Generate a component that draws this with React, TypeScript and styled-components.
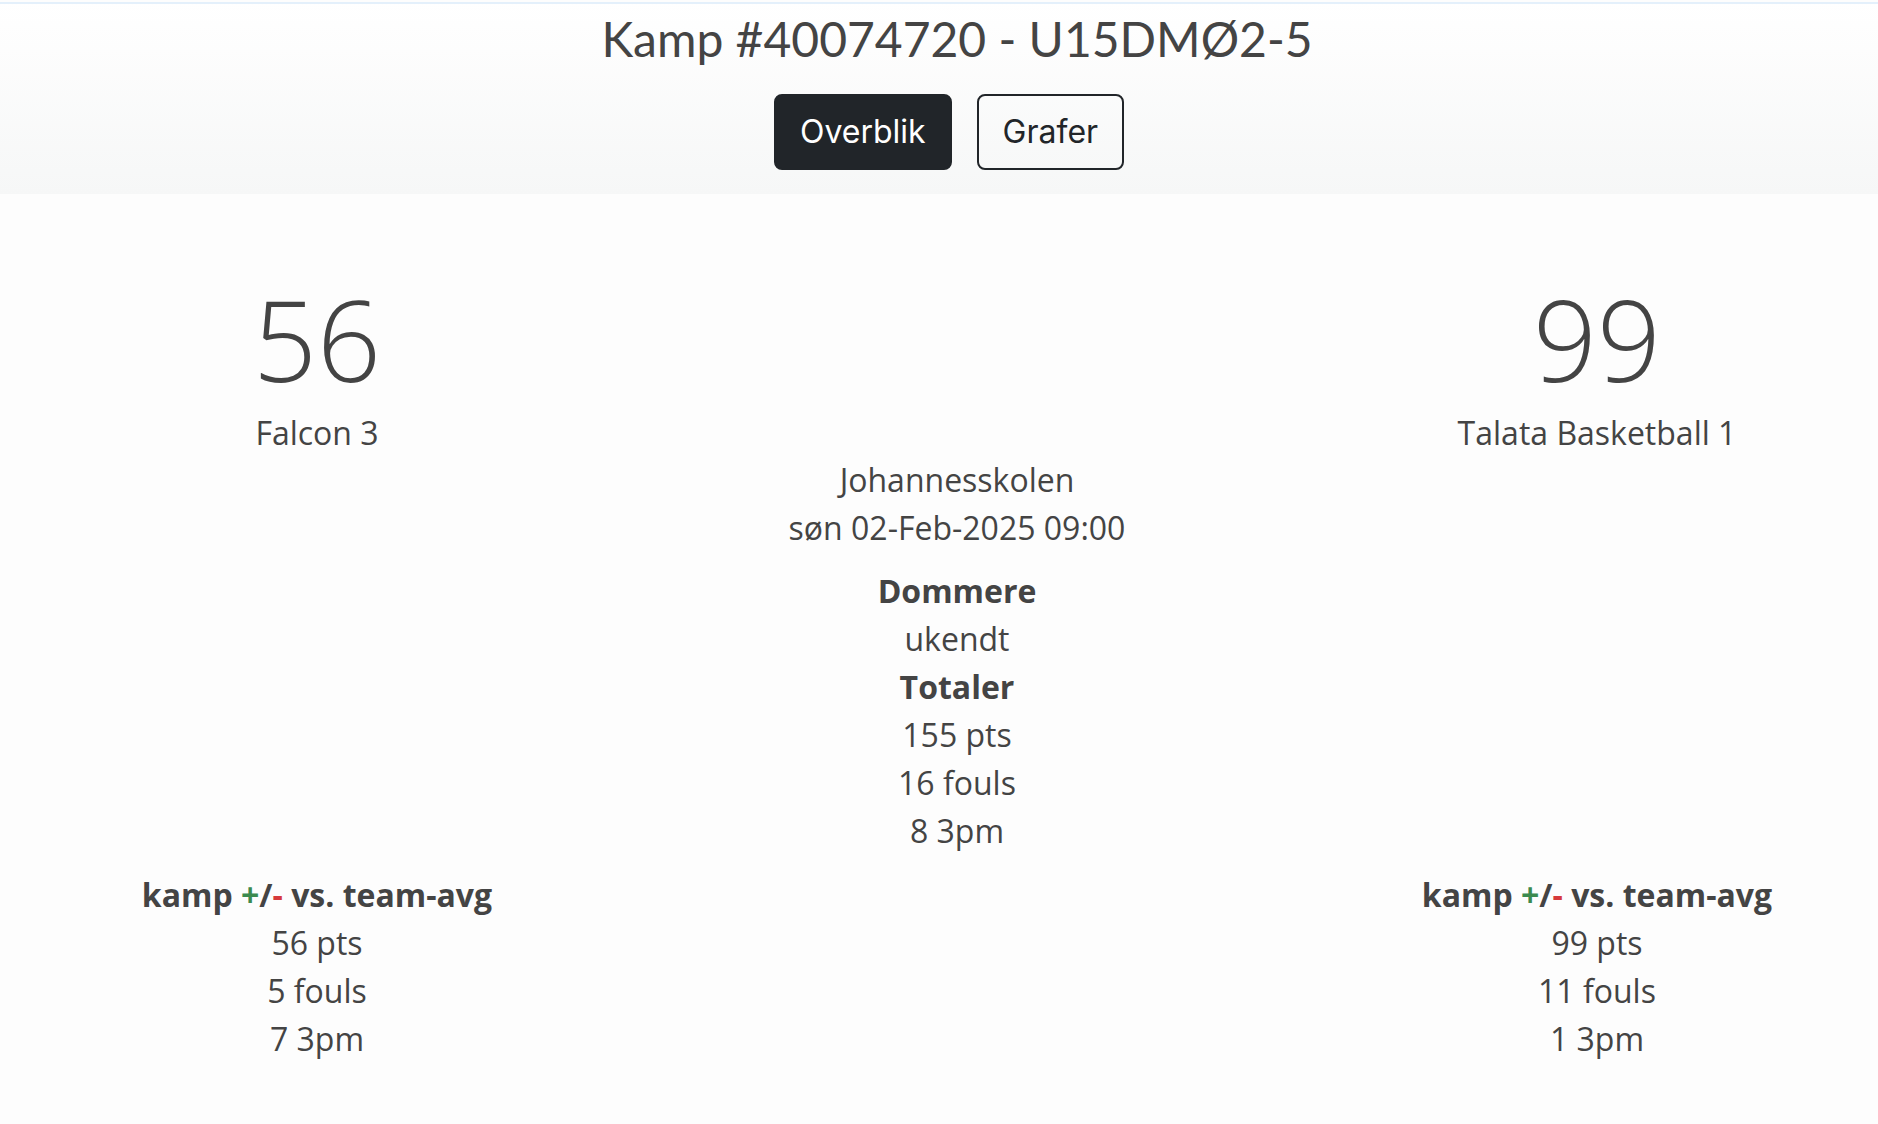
import React from "react";
import styled, { createGlobalStyle } from "styled-components";

const GlobalStyle = createGlobalStyle`
  html, body {
    margin: 0;
    padding: 0;
    overflow: hidden;
    background: #fdfdfd;
  }
  body {
    font-family: "Open Sans", "Liberation Sans", sans-serif;
    color: #444;
  }
`;

const Page = styled.div`
  width: 1914px;
  min-height: 1124px;
  background: #fdfdfd;
`;

const Header = styled.header`
  background: linear-gradient(#ffffff, #f6f7f7);
  padding-bottom: 24px;
  text-align: center;
`;

const TopRule = styled.div`
  height: 2px;
  margin-top: 2px;
  background: #e4f0fb;
`;

const Title = styled.h1`
  margin: 5.6px 0 0;
  font-family: Lato, "Liberation Sans", sans-serif;
  font-weight: 400;
  font-size: 48px;
  line-height: 57.6px;
  color: #444;
`;

const ButtonRow = styled.div`
  display: flex;
  justify-content: center;
  gap: 9px;
  margin-top: 26.8px;
`;

const TabButton = styled.button<{ $active?: boolean }>`
  font-family: Inter, "Liberation Sans", sans-serif;
  font-size: 32px;
  line-height: 48px;
  padding: 12px 24px;
  border: 2px solid #212529;
  border-radius: 8px;
  margin-right: 16px;
  background: ${(p) => (p.$active ? "#212529" : "transparent")};
  color: ${(p) => (p.$active ? "#ffffff" : "#212529")};
  cursor: pointer;
`;

const Board = styled.main`
  display: grid;
  grid-template-columns: repeat(3, 1fr);
  margin: 78px -3px 0;
  text-align: center;
  font-size: 32px;
  line-height: 48px;
`;

const Cell = styled.div<{ $col: number; $row: number }>`
  grid-column: ${(p) => p.$col};
  grid-row: ${(p) => p.$row};
`;

const Score = styled.div`
  font-size: 112px;
  font-weight: 300;
  line-height: 134.4px;
`;

const TeamName = styled.div`
  margin-top: 2.4px;
`;

const InfoBlock = styled.p<{ $gapBelow: number }>`
  margin: 0 0 ${(p) => p.$gapBelow}px;
`;

const InfoStack = styled.div`
  margin-top: -0.8px;
`;

const Strong = styled.strong`
  font-weight: 700;
`;

const Line = styled.span`
  display: block;
`;

const Plus = styled.span`
  color: #3b8a4f;
`;

const Minus = styled.span`
  color: #d63a3c;
`;

type TeamStats = { pts: number; fouls: number; threes: number };

const StatsBlock: React.FC<{ stats: TeamStats }> = ({ stats }) => (
  <div>
    <Line>
      <Strong>
        kamp <Plus>+</Plus>/<Minus>-</Minus> vs. team-avg
      </Strong>
    </Line>
    <Line>{stats.pts} pts</Line>
    <Line>{stats.fouls} fouls</Line>
    <Line>{stats.threes} 3pm</Line>
  </div>
);

export default function App() {
  return (
    <Page>
      <GlobalStyle />
      <Header>
        <TopRule />
        <Title>Kamp #40074720 - U15DMØ2-5</Title>
        <ButtonRow>
          <TabButton $active>Overblik</TabButton>
          <TabButton>Grafer</TabButton>
        </ButtonRow>
      </Header>
      <Board>
        <Cell $col={1} $row={1}>
          <Score>56</Score>
          <TeamName>Falcon 3</TeamName>
        </Cell>
        <Cell $col={3} $row={1}>
          <Score>99</Score>
          <TeamName>Talata Basketball 1</TeamName>
        </Cell>
        <Cell $col={2} $row={2}>
          <InfoStack>
            <InfoBlock $gapBelow={15}>
              <Line>Johannesskolen</Line>
              <Line>søn 02-Feb-2025 09:00</Line>
            </InfoBlock>
            <InfoBlock $gapBelow={16.5}>
              <Line>
                <Strong>Dommere</Strong>
              </Line>
              <Line>ukendt</Line>
              <Line>
                <Strong>Totaler</Strong>
              </Line>
              <Line>155 pts</Line>
              <Line>16 fouls</Line>
              <Line>8 3pm</Line>
            </InfoBlock>
          </InfoStack>
        </Cell>
        <Cell $col={1} $row={3}>
          <StatsBlock stats={{ pts: 56, fouls: 5, threes: 7 }} />
        </Cell>
        <Cell $col={3} $row={3}>
          <StatsBlock stats={{ pts: 99, fouls: 11, threes: 1 }} />
        </Cell>
      </Board>
    </Page>
  );
}
